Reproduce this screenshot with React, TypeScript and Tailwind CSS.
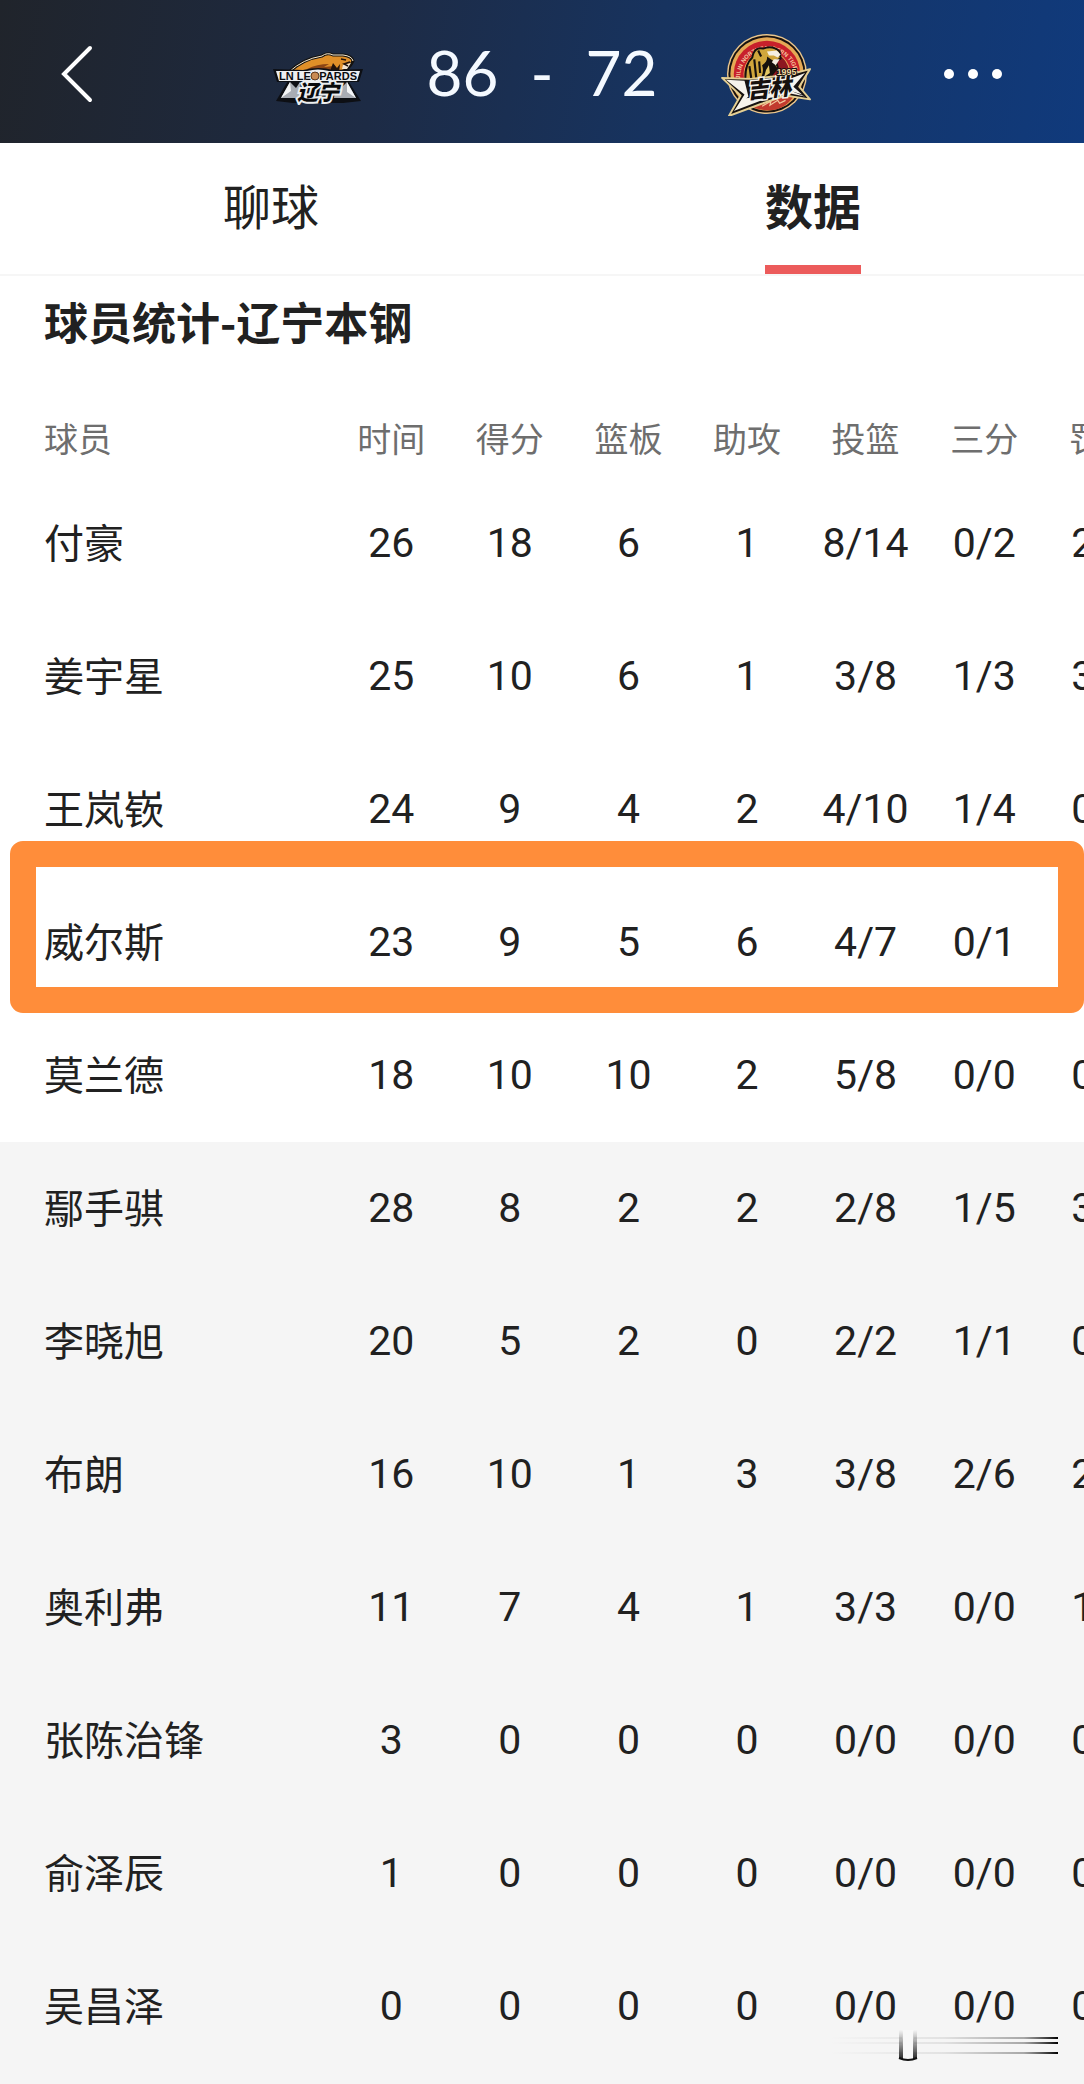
import { useState } from 'react';

interface PlayerRow {
  name: string;
  stats: string[];
}

const COLUMNS = ['时间', '得分', '篮板', '助攻', '投篮', '三分', '罚球'];

const STARTERS: PlayerRow[] = [
  { name: '付豪', stats: ['26', '18', '6', '1', '8/14', '0/2', '2/2'] },
  { name: '姜宇星', stats: ['25', '10', '6', '1', '3/8', '1/3', '3/4'] },
  { name: '王岚嵚', stats: ['24', '9', '4', '2', '4/10', '1/4', '0/0'] },
  { name: '威尔斯', stats: ['23', '9', '5', '6', '4/7', '0/1', '1/2'] },
  { name: '莫兰德', stats: ['18', '10', '10', '2', '5/8', '0/0', '0/0'] },
];

const BENCH: PlayerRow[] = [
  { name: '鄢手骐', stats: ['28', '8', '2', '2', '2/8', '1/5', '3/4'] },
  { name: '李晓旭', stats: ['20', '5', '2', '0', '2/2', '1/1', '0/0'] },
  { name: '布朗', stats: ['16', '10', '1', '3', '3/8', '2/6', '2/2'] },
  { name: '奥利弗', stats: ['11', '7', '4', '1', '3/3', '0/0', '1/1'] },
  { name: '张陈治锋', stats: ['3', '0', '0', '0', '0/0', '0/0', '0/0'] },
  { name: '俞泽辰', stats: ['1', '0', '0', '0', '0/0', '0/0', '0/0'] },
  { name: '吴昌泽', stats: ['0', '0', '0', '0', '0/0', '0/0', '0/0'] },
];

const TABS = ['聊球', '数据'];
const HIGHLIGHTED = '威尔斯';

function LeopardsLogo() {
  return (
    <svg viewBox="0 -8 90 62" className="h-[62px] w-[90px]" role="img" aria-label="辽宁">
      {/* mountains */}
      <path d="M3 50 L16 28 L74 28 L88 50 L70 52 L20 52 Z" fill="#0d0f14" />
      <path d="M8 47 L17 31 L23 37 L27 31 L29 47 Z" fill="#a9adb4" />
      <path d="M83 47 L74 31 L68 37 L63 31 L61 47 Z" fill="#a9adb4" />
      <path d="M8 47 L17 31 L18 40 Z M83 47 L74 31 L74 41 Z" fill="#f4f5f6" />
      {/* leopard */}
      <path
        d="M16 21 Q30 8 49 5 Q54 1 60 4 L70 4 Q79 5 80 10 Q78 15 74 18 L67 22 Z"
        fill="#e08f28"
        stroke="#14120f"
        strokeWidth="3"
      />
      <path d="M16 21 Q30 8 49 5 Q54 1 60 4 L70 4 Q79 5 80 10" fill="none" stroke="#f7e9cf" strokeWidth="1" />
      <path d="M34 18 Q44 13 56 13 L51 16 L61 15 L55 21 L38 20 Z" fill="#8a4415" />
      <path d="M57 20 L60 12 L64 17 L67 13 L66 22 Z" fill="#21130c" />
      <path d="M70 14 L78 12 L74 18 L69 18 Z" fill="#f3e4d0" />
      <path d="M68 8 L73 9 M77 11 L71 13 L75 15" fill="none" stroke="#21130c" strokeWidth="1.5" />
      {/* word band */}
      <path d="M0 18 L30 19 Q46 15 60 19 L90 18 L86 31 L4 31 Z" fill="#0d0f14" />
      <path d="M3 20 L34 20 Q45 17 56 20 L87 20 L84 30 L6 30 Z" fill="#eceef0" />
      <text
        x="45"
        y="29"
        textAnchor="middle"
        fontSize="11"
        fill="#0b0c10"
        className="font-['Liberation_Sans',sans-serif] font-bold"
      >
        LN LEOPARDS
      </text>
      <circle cx="42" cy="25" r="4" fill="#c98b52" stroke="#4c2a14" strokeWidth="0.8" />
      <text
        x="45"
        y="49"
        textAnchor="middle"
        fontSize="21"
        fill="#08090b"
        stroke="#eceef0"
        strokeWidth="4"
        paintOrder="stroke"
        className="font-['Noto_Sans_CJK_SC',sans-serif] font-black italic"
      >
        辽宁
      </text>
    </svg>
  );
}

function TigersLogo() {
  return (
    <svg viewBox="0 0 92 86" className="h-[84px] w-[90px]" role="img" aria-label="吉林">
      <circle cx="47" cy="43" r="41" fill="#e9c58c" />
      <circle cx="47" cy="43" r="39.5" fill="#17110f" />
      <circle cx="47" cy="43" r="37.5" fill="#e5a955" />
      <circle cx="47" cy="43" r="34" fill="#c8202b" />
      <circle cx="47" cy="43" r="24" fill="#e5a955" />
      <circle cx="47" cy="43" r="23" fill="#8d1720" />
      <defs>
        <path id="tigers-ring" d="M22 58 A28 28 0 1 1 73 58" />
      </defs>
      <text fontSize="6" fill="#f6c9a0" className="font-['Liberation_Sans',sans-serif] font-bold">
        <textPath href="#tigers-ring" startOffset="50%" textAnchor="middle">
          JILIN NORTHEASTERN TIGERS
        </textPath>
      </text>
      {/* tiger */}
      <path
        d="M25 50 Q24 33 32 26 Q34 15 43 17 Q53 13 60 20 L61 27 L56 30 L58 36 L52 44 L51 50 Z"
        fill="#d0a63c"
        stroke="#15100d"
        strokeWidth="2"
      />
      <path d="M38 50 Q45 43 42 34 Q48 30 47 25 L54 30 L57 37 L51 44 L50 50 Z" fill="#15100d" />
      <path d="M29 35 L31 48 M34 28 L36 47 M39 30 L40 42 M38 19 L41 25" stroke="#15100d" strokeWidth="2.2" />
      <path d="M47 20 L57 19 L61 23 L58 26 L54 24 L49 24 Z" fill="#f5efe2" />
      <path d="M54 28 L60 28 L56 34 L52 31 Z" fill="#f5efe2" />
      <path d="M46 39 L49 34 L50 42 L44 46 Z" fill="#e5c763" />
      {/* lower arc */}
      <path d="M28 74 Q47 60 74 66 Q64 81 47 80 Q36 80 28 74 Z" fill="#c23a2e" />
      <path d="M42 76 L51 71 L50 75 L58 70 L60 73 L66 70" fill="none" stroke="#f3c9a0" strokeWidth="1.2" />
      {/* star banner */}
      <path
        d="M1 47 L30 48 L68 44 L91 38 L80 56 L91 69 L66 65 L40 74 L8 86 L20 65 Z"
        fill="#16110f"
        stroke="#e5cf93"
        strokeWidth="2"
        strokeLinejoin="round"
      />
      <path d="M5 49 L24 50 L28 66 L14 80 L24 64 Z" fill="#f6f3ec" />
      <path d="M13 81 L24 68 L38 66 L66 58 L86 66 L66 62 L39 71 Z" fill="#f6f3ec" />
      <path d="M86 42 L74 56 L83 64 L70 60 L68 49 Z" fill="#f6f3ec" />
      <text
        x="49"
        y="66"
        textAnchor="middle"
        fontSize="23"
        fill="#16110f"
        stroke="#f6f3ec"
        strokeWidth="3"
        paintOrder="stroke"
        transform="rotate(-6 49 58)"
        className="font-['Noto_Sans_CJK_SC',sans-serif] font-black italic"
      >
        吉林
      </text>
      <text
        x="67"
        y="44"
        textAnchor="middle"
        fontSize="9"
        fill="#f4d9a0"
        stroke="#16110f"
        strokeWidth="2"
        paintOrder="stroke"
        className="font-['Liberation_Sans',sans-serif] font-bold"
      >
        1995
      </text>
    </svg>
  );
}

function MatchHeader() {
  return (
    <header className="flex h-[143px] items-center justify-between bg-[linear-gradient(100deg,#20242b_0%,#1d2b45_35%,#17335f_60%,#103a7c_100%)] px-[60px] pt-1">
      <button type="button" aria-label="返回" className="w-[88px] text-white">
        <svg viewBox="0 0 34 58" className="h-[58px] w-[34px]" fill="none" stroke="currentColor" strokeWidth="4" strokeLinecap="round">
          <path d="M30 3 L4 29 L30 55" />
        </svg>
      </button>
      <div className="flex items-center gap-[64px]">
        <LeopardsLogo />
        <div className="flex items-center justify-center gap-8 pb-1 font-['Lato',sans-serif] text-[62px] leading-none text-[#f4f9ff]">
          <span>86</span>
          <span>-</span>
          <span>72</span>
        </div>
        <TigersLogo />
      </div>
      <button type="button" aria-label="更多" className="flex w-[88px] justify-end gap-[14px] pr-[22px]">
        <span className="size-[10px] shrink-0 rounded-full bg-white" />
        <span className="size-[10px] shrink-0 rounded-full bg-white" />
        <span className="size-[10px] shrink-0 rounded-full bg-white" />
      </button>
    </header>
  );
}

function StatRows({ rows }: { rows: PlayerRow[] }) {
  return (
    <>
      {rows.map((row) => (
        <tr key={row.name} className="h-[133px]">
          <th scope="row" className="relative pb-[6px] pl-[44px] text-left text-[40px] font-normal whitespace-nowrap">
            {row.name}
            {row.name === HIGHLIGHTED && (
              <span className="pointer-events-none absolute -top-[35px] -bottom-[4px] left-[10px] z-10 w-[calc(100vw-10px)] rounded-[13px] border-[26px] border-[#ff8d3a]" />
            )}
          </th>
          {row.stats.map((value, i) => (
            <td key={COLUMNS[i]} className="text-center font-['Roboto',sans-serif] text-[41px]">
              {value}
            </td>
          ))}
        </tr>
      ))}
    </>
  );
}

function CornerSmudge() {
  return (
    <svg viewBox="0 0 230 36" className="absolute right-[24px] bottom-[20px] h-[36px] w-[230px]" aria-hidden="true">
      <defs>
        <linearGradient id="smudge-x" x1="0" x2="1" y1="0" y2="0">
          <stop offset="0" stopColor="#333" stopOpacity="0" />
          <stop offset="0.5" stopColor="#333" stopOpacity="0.1" />
          <stop offset="0.85" stopColor="#333" stopOpacity="0.4" />
          <stop offset="1" stopColor="#000" />
        </linearGradient>
        <linearGradient id="smudge-y" x1="0" x2="0" y1="0" y2="1">
          <stop offset="0" stopColor="#222" stopOpacity="0" />
          <stop offset="1" stopColor="#111" stopOpacity="0.9" />
        </linearGradient>
      </defs>
      <rect x="0" y="9" width="228" height="2" fill="url(#smudge-x)" />
      <rect x="0" y="14" width="228" height="2" fill="url(#smudge-x)" />
      <rect x="0" y="24" width="228" height="2" fill="url(#smudge-x)" />
      <rect x="72" y="2" width="12" height="28" fill="#f8f8f8" />
      <rect x="69" y="2" width="4" height="29" fill="url(#smudge-y)" />
      <rect x="83" y="2" width="4" height="29" fill="url(#smudge-y)" />
      <path d="M69 30 Q78 34 87 30" fill="none" stroke="#111" strokeWidth="2" />
    </svg>
  );
}

export default function App() {
  const [activeTab, setActiveTab] = useState('数据');

  return (
    <main className="relative overflow-hidden bg-[#f5f5f5] pb-[11px] font-['Noto_Sans_CJK_SC',sans-serif] text-[#212121]">
      <MatchHeader />

      <nav className="grid h-[133px] grid-cols-2 border-b-2 border-[#f6f6f6] bg-white">
        {TABS.map((tab) => {
          const active = tab === activeTab;
          return (
            <button
              key={tab}
              type="button"
              onClick={() => setActiveTab(tab)}
              className={`flex flex-col items-center justify-between pt-[26px] text-[48px] leading-[70px] ${active ? 'font-bold' : 'font-normal'}`}
            >
              {tab}
              <span className={`h-[9px] w-[96px] ${active ? 'bg-[#ec5b5b]' : 'bg-transparent'}`} />
            </button>
          );
        })}
      </nav>

      <section>
        <h2 className="bg-white pt-[13px] pb-[3px] pl-[44px] text-[44px] leading-[64px] font-bold">球员统计-辽宁本钢</h2>
        <table className="w-[107.2%] table-fixed border-collapse">
          <thead className="bg-white text-[34px] text-[#6e6e6e]">
            <tr className="h-[121px]">
              <th scope="col" className="w-[332px] pt-[42px] pl-[44px] text-left font-normal">
                球员
              </th>
              {COLUMNS.map((label) => (
                <th key={label} scope="col" className="pt-[42px] font-normal">
                  {label}
                </th>
              ))}
            </tr>
          </thead>
          <tbody className="bg-white">
            <StatRows rows={STARTERS} />
          </tbody>
          <tbody>
            <StatRows rows={BENCH} />
          </tbody>
        </table>
      </section>

      <CornerSmudge />
    </main>
  );
}
